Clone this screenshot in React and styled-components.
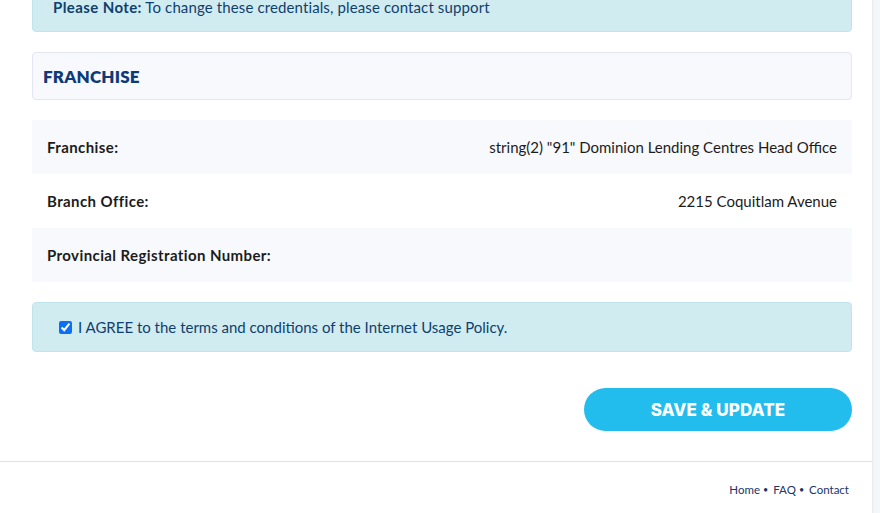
import React from "react";
import styled, { createGlobalStyle } from "styled-components";

const Global = createGlobalStyle`
  html, body { margin: 0; padding: 0; background: #f4f6f9; }
  body { font-family: Lato, "Noto Sans", "Liberation Sans", sans-serif; overflow: hidden; }
  * { box-sizing: border-box; }
`;

const Page = styled.div`
  display: flex;
  min-height: 540px;
  margin-top: -13px;
`;

const Panel = styled.main`
  width: 872px;
  background: #fff;
  box-shadow: 1px 0 2px rgba(0, 0, 0, 0.06);
  display: flex;
  flex-direction: column;
`;

const Content = styled.div`
  padding: 0 20px 30px 32px;
  display: flex;
  flex-direction: column;
`;

const Alert = styled.div`
  background: #d1ecf1;
  border: 1px solid #bee5eb;
  border-radius: 4px;
  color: #0f3f6e;
  font-size: 15px;
  line-height: 22px;
  padding: ${(p) => p.$pad || "12px 20px"};
  margin-bottom: ${(p) => p.$mb || 0}px;
  display: flex;
  align-items: center;
  gap: 6px;
`;

const Note = styled.span`
  letter-spacing: 0.12px;
`;

const Strong = styled.strong`
  font-weight: 700;
  letter-spacing: 0.4px;
`;

const SectionHead = styled.div`
  background: #f8f9fc;
  border: 1px solid #e3e6f0;
  border-radius: 4px;
  height: 48px;
  padding: 0 10px;
  display: flex;
  align-items: center;
  margin-bottom: 20px;
`;

const SectionTitle = styled.h3`
  margin: 0;
  font-size: 17px;
  font-weight: 800;
  color: #0d3b78;
  letter-spacing: 0.2px;
`;

const Table = styled.div`
  display: flex;
  flex-direction: column;
  margin-bottom: 20px;
`;

const Row = styled.div`
  height: 54px;
  display: flex;
  align-items: center;
  justify-content: space-between;
  padding: 0 15px;
  background: ${(p) => (p.$striped ? "#f8f9fc" : "#fff")};
  font-size: 15px;
  color: #1c1c1c;
`;

const Label = styled.span`
  font-weight: 700;
  letter-spacing: 0.4px;
`;

const Value = styled.span`
  font-weight: 400;
`;

const Check = styled.input`
  width: 13px;
  height: 13px;
  margin: 0;
  accent-color: #0b6ff7;
`;

const Actions = styled.div`
  display: flex;
  justify-content: flex-end;
  margin-top: 36px;
`;

const Button = styled.button`
  width: 268px;
  height: 43px;
  border: none;
  border-radius: 22px;
  background: #22bced;
  color: #fff;
  font-family: Inter, "Noto Sans", sans-serif;
  font-weight: 800;
  font-size: 17px;
  letter-spacing: 0.1px;
  cursor: pointer;
`;

const Footer = styled.footer`
  border-top: 1px solid #dde4e7;
  padding: 21px 23px 0 0;
  display: flex;
  justify-content: flex-end;
  align-items: flex-start;
  flex: 1;
`;

const FooterNav = styled.nav`
  display: flex;
  align-items: center;
  font-size: 11.5px;
  color: #1a3566;
`;

const FooterLink = styled.a`
  color: #1a3566;
  text-decoration: none;
`;

const Dot = styled.span`
  margin: 0 5px 0 3px;
  font-size: 9px;
`;

const rows = [
  { label: "Franchise:", value: 'string(2) "91" Dominion Lending Centres Head Office' },
  { label: "Branch Office:", value: "2215 Coquitlam Avenue" },
  { label: "Provincial Registration Number:", value: "" },
];

export default function App() {
  return (
    <>
      <Global />
      <Page>
        <Panel>
          <Content>
            <Alert $pad="8px 20px 13px 20px" $mb={20}>
              <Note>
                <Strong>Please Note:</Strong> To change these credentials, please contact support
              </Note>
            </Alert>
            <SectionHead>
              <SectionTitle>FRANCHISE</SectionTitle>
            </SectionHead>
            <Table>
              {rows.map((r, i) => (
                <Row key={r.label} $striped={i % 2 === 0}>
                  <Label>{r.label}</Label>
                  <Value>{r.value}</Value>
                </Row>
              ))}
            </Table>
            <Alert $pad="13px 26px">
              <Check type="checkbox" defaultChecked />
              <span>I AGREE to the terms and conditions of the Internet Usage Policy.</span>
            </Alert>
            <Actions>
              <Button>SAVE &amp; UPDATE</Button>
            </Actions>
          </Content>
          <Footer>
            <FooterNav>
              <FooterLink href="#">Home</FooterLink>
              <Dot>•</Dot>
              <FooterLink href="#">FAQ</FooterLink>
              <Dot>•</Dot>
              <FooterLink href="#">Contact</FooterLink>
            </FooterNav>
          </Footer>
        </Panel>
      </Page>
    </>
  );
}
